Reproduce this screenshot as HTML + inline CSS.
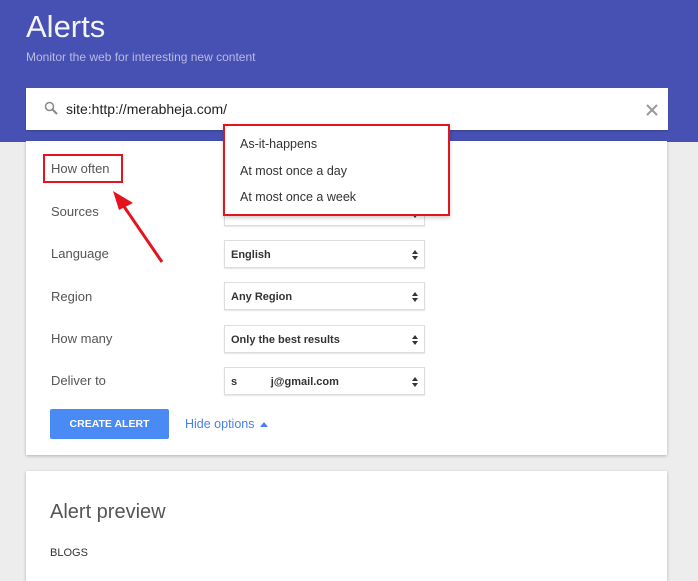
<!DOCTYPE html><html><head><style>
*{margin:0;padding:0;box-sizing:border-box}
body{width:698px;height:569px;overflow:hidden;background:#ededed;font-family:"Liberation Sans",sans-serif;position:relative}
.hdr{position:absolute;left:0;top:0;width:698px;height:142px;background:#4751b3}
.a{position:absolute}
.lbl{position:absolute;left:51px;font-size:13px;color:#555}
.sel{position:absolute;left:224px;width:201px;height:28px;background:#fff;border:1px solid #ddd;box-shadow:0 1px 1px rgba(0,0,0,.1);font-size:11px;font-weight:bold;color:#333;padding:8px 0 0 6px}
.sel:after{content:"";position:absolute;right:6px;top:9px;border:3px solid transparent;border-bottom:4px solid #333;border-top:0}
.sel:before{content:"";position:absolute;right:6px;top:15px;border:3px solid transparent;border-top:4px solid #333;border-bottom:0}
.card{position:absolute;left:26px;width:641px;background:#fff;box-shadow:0 1px 3px rgba(0,0,0,.25)}
</style></head><body>
<div class="hdr"></div>
<div class="a" style="left:26px;top:9px;font-size:31px;color:#f4f4fb;font-weight:300">Alerts</div>
<div class="a" style="left:26px;top:50px;font-size:12px;color:#b7bbe6">Monitor the web for interesting new content</div>
<div class="card" style="top:141px;height:314px"></div>
<div class="a" style="left:26px;top:88px;width:642px;height:42px;background:#fff;box-shadow:0 1px 2px rgba(0,0,0,.2)"></div>
<svg class="a" style="left:44px;top:101px" width="14" height="14"><circle cx="5.5" cy="5.5" r="4" fill="none" stroke="#888" stroke-width="1.5"/><path d="M8.5 8.5L13 13" stroke="#888" stroke-width="2"/></svg>
<div class="a" style="left:66px;top:101px;font-size:14px;color:#222">site:http://merabheja.com/</div>
<svg class="a" style="left:646px;top:104px" width="12" height="12"><path d="M1 1L11 11M11 1L1 11" stroke="#999" stroke-width="2"/></svg>
<div class="a" style="left:43px;top:154px;width:80px;height:29px;border:2px solid #e3141e"></div>
<div class="lbl" style="top:161px">How often</div>
<div class="lbl" style="top:204px">Sources</div>
<div class="lbl" style="top:246px">Language</div>
<div class="lbl" style="top:289px">Region</div>
<div class="lbl" style="top:331px">How many</div>
<div class="lbl" style="top:373px">Deliver to</div>
<div class="sel" style="top:198px"></div>
<div class="sel" style="top:240px">English</div>
<div class="sel" style="top:282px">Any Region</div>
<div class="sel" style="top:325px">Only the best results</div>
<div class="sel" style="top:367px">s&nbsp;&nbsp;&nbsp;&nbsp;&nbsp;&nbsp;&nbsp;&nbsp;&nbsp;&nbsp;&nbsp;j@gmail.com</div>
<div class="a" style="left:223px;top:124px;width:227px;height:92px;background:#fff;border:2px solid #e3141e;box-shadow:0 2px 4px rgba(0,0,0,.2)"></div>
<div class="a" style="left:240px;top:137px;font-size:12.5px;color:#333">As-it-happens</div>
<div class="a" style="left:240px;top:164px;font-size:12.5px;color:#333">At most once a day</div>
<div class="a" style="left:240px;top:190px;font-size:12.5px;color:#333">At most once a week</div>
<svg class="a" style="left:105px;top:185px" width="70" height="80"><path d="M57 77L18 20" stroke="#e3141e" stroke-width="3"/><path d="M8 6L28 18L14 25Z" fill="#e3141e"/></svg>
<div class="a" style="left:50px;top:409px;width:119px;height:30px;background:#4a8af4;border-radius:2px;color:#fff;font-size:10.5px;font-weight:bold;text-align:center;line-height:30px">CREATE ALERT</div>
<div class="a" style="left:185px;top:417px;font-size:12.5px;color:#4a7ff0">Hide options</div>
<div class="a" style="left:260px;top:422px;border:4px solid transparent;border-bottom:5px solid #4a7ff0;border-top:0"></div>
<div class="card" style="top:471px;height:110px"></div>
<div class="a" style="left:50px;top:501px;font-size:20px;color:#555;font-weight:300">Alert preview</div>
<div class="a" style="left:50px;top:547px;font-size:11px;color:#333">BLOGS</div>
</body></html>
